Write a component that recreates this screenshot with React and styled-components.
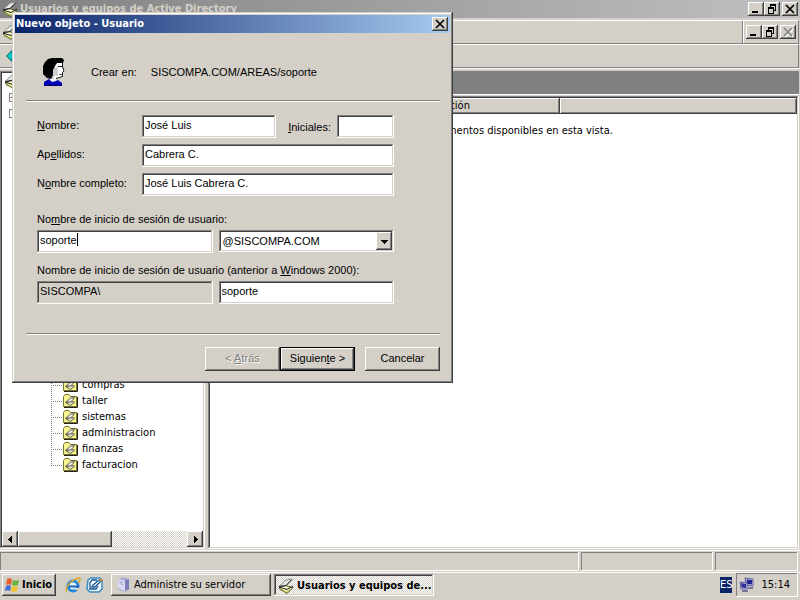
import React, { useState } from "react";
import styled, { createGlobalStyle, css } from "styled-components";

const tahoma = '"DejaVu Sans Condensed", "DejaVu Sans", sans-serif';
const msSans = '"Liberation Sans", Arial, sans-serif';
const face = "#d4d0c8";

const raised = css`
  box-shadow: inset -1px -1px #404040, inset 1px 1px #fff,
    inset -2px -2px #808080, inset 2px 2px ${face};
`;

const sunken = css`
  box-shadow: inset -1px -1px #fff, inset 1px 1px #808080,
    inset -2px -2px ${face}, inset 2px 2px #404040;
`;

const thinSunken = css`
  box-shadow: inset -1px -1px #fff, inset 1px 1px #808080;
`;

const dither = css`
  background: repeating-conic-gradient(#fff 0 25%, ${face} 0 50%) 0 0 / 2px 2px;
`;

const GlobalStyle = createGlobalStyle`
  * {
    box-sizing: border-box;
  }

  body {
    margin: 0;
    background: ${face};
    color: #000;
    font: 11px/14px ${tahoma};
  }

  button, input, select {
    margin: 0;
    padding: 0;
    border: none;
    border-radius: 0;
    outline: none;
    color: inherit;
    font: inherit;
  }

  svg {
    display: block;
    flex: none;
  }
`;

const units = [
  "compras",
  "taller",
  "sistemas",
  "administracion",
  "finanzas",
  "facturacion",
];

/* Icons */

const ConsoleIcon = () => (
  <svg width="16" height="16" viewBox="0 0 16 16">
    <path d="M1 10 7 7.500 15 9.500 9 15.500Z" fill="#eeeea0" stroke="#55552a" />
    <path d="M2 12 9 14.500 14 10.500" fill="none" stroke="#9a9a48" />
    <path d="M1 8.500 8 2 14 1 8 7.500Z" fill="#e4e6e6" stroke="#8a8d8e" />
    <path d="M1 8.500 8 7.500 14 1.500" fill="none" stroke="#222" />
    <path d="M1 9 9 11.500 15 8" fill="none" stroke="#222" />
    <path d="M5 9.500h5" stroke="#fff" />
  </svg>
);

const FolderIcon = () => (
  <svg width="16" height="16" viewBox="0 0 16 16">
    <path d="M1.500 3.500 3 1.500H7L8.500 3.500H14.500V13.500H1.500Z" fill="#f5f48c" stroke="#77772e" />
    <path d="M15.500 4V14.500H2" fill="none" stroke="#222" />
    <path d="M3.500 9.500 8 8.500 12.500 9 8.500 12.500Z" fill="#e8e6b8" stroke="#555" />
    <path d="M4 9 8.500 5 12.500 4.500 9 9Z" fill="#e6e6e6" stroke="#444" strokeWidth=".8" />
  </svg>
);

const UserIcon = () => (
  <svg width="24" height="30" viewBox="0 0 24 30">
    <path d="M11 5H20V10L22 14 20 15.500 19.500 20 14 21 13 25 8 24Z" fill="#fff" />
    <path d="M11 10H16V19H12V22H9V13Z" fill="#d0d0d0" />
    <path d="M3 5 6 2 10 1H20L22 3 21 6H15L13 9 11 13V18L9 22 5 21 1 17V9Z" fill="#000" />
    <path d="M16 9.500h4M20.500 6v4l1.500 4-1.500 1.500V19.500L14 21.500" fill="none" stroke="#000" strokeWidth=".9" />
    <path d="M17 17.500h3" stroke="#555" />
    <path d="M2 25 7 22 10 25 14 24 16 23 20 26V29H2Z" fill="#0000b8" />
    <path d="M2 28.500H20" stroke="#000060" />
  </svg>
);

const BackIcon = () => (
  <svg width="14" height="12" viewBox="0 0 14 12">
    <path d="M.5 6 6 .5V3.500H13V8.500H6V11.500Z" fill="#00c8c8" stroke="#006060" />
  </svg>
);

const WindowGlyph = ({ type }) => (
  <svg width="10" height="10" viewBox="0 0 10 10" fill="none" stroke="currentColor" shapeRendering="crispEdges">
    {type === "min" && <path d="M1 8h6" strokeWidth="2" />}
    {type === "max" && (
      <>
        <path d="M3 1h6M1 4h6" strokeWidth="2" />
        <path d="M3.500 2v2M8.500 2v4.500H7M1.500 5v4.500H6.500V5" />
      </>
    )}
    {type === "close" && (
      <path d="M1 1 9 9M9 1 1 9" strokeWidth="1.700" shapeRendering="auto" />
    )}
  </svg>
);

const Arrow = ({ to }) => (
  <svg width="7" height="7" viewBox="0 0 7 7" shapeRendering="crispEdges">
    {to === "left" && <path d="M5 0V7L1 3.500Z" />}
    {to === "right" && <path d="M2 0V7L6 3.500Z" />}
    {to === "down" && <path d="M0 2H7L3.500 6Z" />}
  </svg>
);

const StartFlag = () => (
  <svg width="16" height="16" viewBox="0 0 16 16">
    <path d="M3 2C5 1 6 1 8 2L7 8C5 7 4 7 2 8Z" fill="#e8602c" />
    <path d="M9 3C11 4 13 4 15 3L14 8C12 9 10 9 8 8Z" fill="#6cb33e" />
    <path d="M2 9C4 8 5 8 7 9L6 14C4 13 3 13 1 14Z" fill="#3d6fd0" />
    <path d="M8 9C10 10 12 10 14 9L13 14C11 15 9 15 7 14Z" fill="#f4c22c" />
  </svg>
);

const ExplorerIcon = () => (
  <svg width="16" height="16" viewBox="0 0 16 16">
    <circle cx="8" cy="9" r="5" fill="#e6f5ff" stroke="#2787d8" strokeWidth="3" />
    <path d="M4 9.500H14" stroke="#1667b8" strokeWidth="2" />
    <path d="M10 12H15" stroke="#d4d0c8" strokeWidth="2" />
    <path d="M2 15C-1 12 5 3 14 1 16 1 15 4 13 6" fill="none" stroke="#d9a92e" strokeWidth="1.500" />
  </svg>
);

const DesktopIcon = () => (
  <svg width="17" height="16" viewBox="0 0 17 16">
    <path d="M2 3 5 1H14L16 3V12L13 15H4L1 12Z" fill="#e9f7fd" stroke="#3b8cc0" strokeWidth="1.500" />
    <path d="M11 3H6L4 6V12H10L12 9M7 8 13 3 15 4 9 10 6 10Z" fill="#fff" stroke="#14558f" strokeWidth="1.300" />
    <path d="M14 2 16 4" stroke="#e28a2c" strokeWidth="2" />
  </svg>
);

const ServerIcon = () => (
  <svg width="16" height="16" viewBox="0 0 16 16">
    <path d="M1 12 5 10 15 12 10 15.500Z" fill="#b9b9c8" />
    <path d="M3 2 8 .5 14 2V12L10 14 3 11Z" fill="#a8a7d8" />
    <path d="M3 2 10 3.500V14L3 11Z" fill="#d9d9f2" />
    <path d="M10 3.500 14 2V12L10 14Z" fill="#7d7bb8" />
    <path d="M4.500 4.500 8.500 5.500M4.500 6.500 8.500 7.500" stroke="#a4a4cc" />
  </svg>
);

const NetworkIcon = () => (
  <svg width="16" height="16" viewBox="0 0 16 16">
    <path d="M6 1 14 2V9L7 8Z" fill="#c7c7e8" stroke="#5c5c9a" />
    <path d="M7.500 2.500 13 3V7.500L8 7Z" fill="#23238c" />
    <path d="M1 5 8 6V12L2 12Z" fill="#d2d2ee" stroke="#5c5c9a" />
    <path d="M2 6 7 7V11L2.500 10.500Z" fill="#2d2d9c" />
    <path d="M3 14h6M9 11h5" stroke="#77779c" strokeWidth="2" />
  </svg>
);

/* Main window */

const Screen = styled.div`
  display: flex;
  flex-direction: column;
  height: 100vh;
  overflow: hidden;
`;

const MainWindow = styled.main`
  flex: 1;
  min-height: 0;
  display: flex;
  flex-direction: column;
`;

const TitleBar = styled.header`
  display: flex;
  align-items: center;
  gap: 2px;
  height: 18px;
  margin-bottom: 2px;
  padding: 0 2px;
  background: linear-gradient(90deg, #808080, #c0c0c0);
  color: ${face};
  font-weight: bold;
`;

const Caption = styled.h1`
  flex: 1;
  margin: 0;
  font-size: 11px;
  line-height: 14px;
  white-space: nowrap;
`;

const WindowButtons = styled.div`
  display: flex;

  > :last-child {
    margin-left: 2px;
  }
`;

const WindowButton = styled.button`
  display: grid;
  place-items: center;
  width: 16px;
  height: 14px;
  background: ${face};
  color: #000;
  ${raised}

  &:disabled {
    color: #808080;
  }

  &:disabled svg {
    filter: drop-shadow(1px 1px #fff);
  }
`;

const Bar = styled.div`
  display: flex;
  align-items: center;
  height: 24px;
  margin-right: 1px;
  border-top: 1px solid #fff;
  border-right: 1px solid #808080;
  border-bottom: 1px solid #808080;
`;

const MenuArea = styled.div`
  flex: 1;
  align-self: stretch;
  display: flex;
  align-items: center;
  padding-left: 2px;
  border-right: 1px solid #808080;
`;

const ChildButtons = styled.div`
  align-self: stretch;
  display: flex;
  align-items: center;
  padding: 0 2px;
  border-left: 1px solid #fff;
`;

const ToolArea = styled.div`
  padding-left: 6px;
`;

const Panes = styled.div`
  flex: 1;
  min-height: 0;
  display: grid;
  grid-template-columns: 205px minmax(0, 1fr);
  gap: 3px;
  padding: 2px 1px 1px 0;
  border-top: 1px solid #fff;
`;

const TreePane = styled.nav`
  display: flex;
  flex-direction: column;
  min-height: 0;
  padding: 2px;
  background: #fff;
  ${sunken}
`;

const Tree = styled.ul`
  flex: 1;
  min-height: 0;
  margin: 0;
  padding: 0;
  overflow: hidden;
  list-style: none;
`;

const TreeNode = styled.li`
  display: flex;
  align-items: center;
  height: 16px;
  padding-left: ${(p) => (p.$level ? "7px" : "2px")};
`;

const Expander = styled.span`
  width: 9px;
  height: 9px;
  border: 1px solid #808080;
  font-size: 9px;
  line-height: 7px;
  text-align: center;
`;

const Units = styled.ul`
  margin: 256px 0 0;
  padding: 0 0 0 49px;
  list-style: none;
`;

const Unit = styled.li`
  display: flex;
  align-items: center;
  height: 16px;

  &::before {
    content: "";
    width: 11px;
    height: 16px;
    background:
      repeating-linear-gradient(#808080 0 1px, transparent 1px 2px) 0 0 / 1px 100% no-repeat,
      repeating-linear-gradient(90deg, #808080 0 1px, transparent 1px 2px) 0 8px / 100% 1px no-repeat;
  }

  &:last-child::before {
    background-size: 1px 9px, 100% 1px;
  }
`;

const UnitName = styled.span`
  padding-left: 4px;
`;

const ScrollBar = styled.div`
  display: flex;
  height: 16px;
  ${dither}
`;

const ScrollButton = styled.button`
  display: grid;
  place-items: center;
  width: 16px;
  background: ${face};
  ${raised}
`;

const ScrollThumb = styled.div`
  width: 94px;
  margin-right: auto;
  background: ${face};
  ${raised}
`;

const ResultPane = styled.section`
  display: flex;
  flex-direction: column;
  min-width: 0;
`;

const ResultBanner = styled.div`
  height: 24px;
  margin-bottom: 1px;
  border-bottom: 1px solid #fff;
  background: #808080;
`;

const ListBox = styled.div`
  flex: 1;
  padding: 2px;
  background: #fff;
  ${sunken}
`;

const List = styled.table`
  width: 100%;
  border-collapse: collapse;
  table-layout: fixed;
`;

const ColumnHead = styled.th`
  width: ${(p) => p.$width};
  height: 16px;
  padding: 0 6px;
  background: ${face};
  font-weight: normal;
  text-align: left;
  ${raised}
`;

const EmptyMessage = styled.td`
  padding: 10px 0;
  text-align: center;
`;

const StatusBar = styled.footer`
  display: grid;
  grid-template-columns: minmax(0, 1fr) 132px 83px;
  gap: 2px;
  height: 22px;
  padding: 1px 2px 1px 0;
  border-top: 1px solid #fff;
`;

const StatusPanel = styled.div`
  ${thinSunken}
`;

/* Dialog */

const Dialog = styled.form`
  position: absolute;
  top: 12px;
  left: 12px;
  width: 441px;
  padding: 3px;
  background: ${face};
  box-shadow: inset -1px -1px #404040, inset 1px 1px ${face},
    inset -2px -2px #808080, inset 2px 2px #fff;
  font-family: ${msSans};
`;

const DialogTitle = styled.header`
  display: flex;
  align-items: center;
  height: 18px;
  padding: 0 2px 0 1px;
  background: linear-gradient(90deg, #0a246a, #a6caf0);
  color: #fff;
  font-family: ${tahoma};
  font-weight: bold;
`;

const DialogBody = styled.div`
  padding: 24px 10px 9px 11px;
`;

const Target = styled.div`
  display: flex;
  align-items: center;
  gap: 14px;
  padding: 0 16px 13px;
`;

const TargetLabel = styled.span`
  margin-left: 11px;
`;

const Rule = styled.hr`
  height: 2px;
  margin: 0;
  border: none;
  border-top: 1px solid #808080;
  border-bottom: 1px solid #fff;
`;

const Fields = styled.div`
  padding: 13px 46px 29px 11px;
`;

const PersonGrid = styled.div`
  display: grid;
  grid-template-columns: 105px minmax(0, 1fr);
  align-items: center;
  row-gap: 6px;

  > label {
    padding-bottom: 3px;
  }
`;

const NameRow = styled.div`
  display: grid;
  grid-template-columns: minmax(0, 1fr) auto 57px;
  align-items: center;
  column-gap: 6px;

  label {
    padding-left: 6px;
  }
`;

const TextBox = styled.input`
  width: 100%;
  height: 23px;
  padding: 0 3px 4px;
  background: #fff;
  ${sunken}

  &:read-only {
    background: ${face};
  }
`;

const LogonRow = styled.div`
  display: grid;
  grid-template-columns: 1fr 1fr;
  gap: 6px;
  margin-top: 4px;
`;

const LogonLabel = styled.label`
  display: block;
  margin-top: ${(p) => (p.$first ? "16px" : "10px")};
`;

const ActiveBox = styled.div`
  display: flex;
  align-items: center;
  height: 23px;
  padding: 0 3px 4px;
  background: #fff;
  ${sunken}
`;

const ActiveInput = styled.input`
  field-sizing: content;
  max-width: 100%;
  background: none;
  caret-color: transparent;
`;

const Caret = styled.span`
  width: 1px;
  height: 13px;
  background: #000;
`;

const Combo = styled.div`
  position: relative;
  height: 22px;
`;

const ComboSelect = styled.select`
  width: 100%;
  height: 100%;
  padding: 0 20px 0 4px;
  appearance: none;
  background: #fff;
  ${sunken}
`;

const ComboArrow = styled.span`
  position: absolute;
  top: 2px;
  right: 2px;
  bottom: 2px;
  width: 16px;
  display: grid;
  place-items: center;
  background: ${face};
  pointer-events: none;
  ${raised}
`;

const Actions = styled.div`
  display: flex;
  justify-content: flex-end;
  padding-top: 12px;
`;

const ActionButton = styled.button`
  width: 75px;
  height: 24px;
  padding-bottom: 2px;
  background: ${face};
  ${raised}

  &:disabled {
    color: #808080;
    text-shadow: 1px 1px #fff;
  }

  &[type="submit"] {
    border: 1px solid #000;
  }

  &:last-child {
    margin-left: 10px;
  }
`;

/* Taskbar */

const TaskBar = styled.footer`
  display: flex;
  align-items: center;
  height: 28px;
  padding: 0 2px 3px;
  border-top: 1px solid #fff;
`;

const StartButton = styled.button`
  display: flex;
  align-items: center;
  gap: 2px;
  width: 54px;
  height: 22px;
  padding: 0 2px;
  background: ${face};
  font-weight: bold;
  ${raised}
`;

const QuickLaunch = styled.div`
  display: flex;
  gap: 5px;
  padding: 0 8px 0 9px;
`;

const QuickButton = styled.button`
  background: none;
`;

const Tasks = styled.div`
  flex: 1;
  display: flex;
  gap: 3px;
`;

const TaskButton = styled.button`
  display: flex;
  align-items: center;
  gap: 3px;
  width: 160px;
  height: 22px;
  padding: 0 4px;
  white-space: nowrap;
  ${(p) =>
    p.$active
      ? css`
          ${dither}
          ${sunken}
          padding-top: 2px;
          font-weight: bold;
        `
      : css`
          background: ${face};
          ${raised}
        `}
`;

const Language = styled.span`
  height: 16px;
  margin-right: 4px;
  background: #0a246a;
  color: #fff;
  line-height: 16px;
`;

const Tray = styled.div`
  display: flex;
  align-items: center;
  gap: 6px;
  height: 24px;
  padding: 0 8px 0 3px;
  ${thinSunken}
`;

const TopButtons = ({ closeDisabled }) => (
  <WindowButtons>
    <WindowButton type="button" aria-label="Minimizar">
      <WindowGlyph type="min" />
    </WindowButton>
    <WindowButton type="button" aria-label="Restaurar">
      <WindowGlyph type="max" />
    </WindowButton>
    <WindowButton type="button" aria-label="Cerrar" disabled={closeDisabled}>
      <WindowGlyph type="close" />
    </WindowButton>
  </WindowButtons>
);

const NewUserDialog = () => {
  const [user, setUser] = useState({
    first: "José Luis",
    initials: "",
    last: "Cabrera C.",
    full: "José Luis Cabrera C.",
    logon: "soporte",
    oldLogon: "soporte",
  });

  const bind = (key) => ({
    id: key,
    value: user[key],
    onChange: (e) => setUser({ ...user, [key]: e.target.value }),
  });

  return (
    <Dialog role="dialog" aria-labelledby="dialog-title" autoComplete="off" onSubmit={(e) => e.preventDefault()}>
      <DialogTitle>
        <Caption as="h2" id="dialog-title">Nuevo objeto - Usuario</Caption>
        <WindowButton type="button" aria-label="Cerrar">
          <WindowGlyph type="close" />
        </WindowButton>
      </DialogTitle>
      <DialogBody>
        <Target>
          <UserIcon />
          <TargetLabel>Crear en:</TargetLabel>
          <span>SISCOMPA.COM/AREAS/soporte</span>
        </Target>
        <Rule />
        <Fields>
          <PersonGrid>
            <label htmlFor="first"><u>N</u>ombre:</label>
            <NameRow>
              <TextBox {...bind("first")} />
              <label htmlFor="initials"><u>I</u>niciales:</label>
              <TextBox {...bind("initials")} />
            </NameRow>
            <label htmlFor="last">Ap<u>e</u>llidos:</label>
            <TextBox {...bind("last")} />
            <label htmlFor="full">N<u>o</u>mbre completo:</label>
            <TextBox {...bind("full")} />
          </PersonGrid>
          <LogonLabel $first htmlFor="logon">
            No<u>m</u>bre de inicio de sesión de usuario:
          </LogonLabel>
          <LogonRow>
            <ActiveBox>
              <ActiveInput {...bind("logon")} spellCheck={false} />
              <Caret />
            </ActiveBox>
            <Combo>
              <ComboSelect aria-label="Dominio">
                <option>@SISCOMPA.COM</option>
              </ComboSelect>
              <ComboArrow>
                <Arrow to="down" />
              </ComboArrow>
            </Combo>
          </LogonRow>
          <LogonLabel htmlFor="oldLogon">
            Nombre de inicio de sesión de usuario (anterior a <u>W</u>indows 2000):
          </LogonLabel>
          <LogonRow>
            <TextBox readOnly aria-label="Dominio anterior" value={"SISCOMPA\\"} />
            <TextBox {...bind("oldLogon")} />
          </LogonRow>
        </Fields>
        <Rule />
        <Actions>
          <ActionButton type="button" disabled>&lt; <u>A</u>trás</ActionButton>
          <ActionButton type="submit">Siguien<u>t</u>e &gt;</ActionButton>
          <ActionButton type="button">Cancelar</ActionButton>
        </Actions>
      </DialogBody>
    </Dialog>
  );
};

const App = () => (
  <Screen>
    <GlobalStyle />
    <MainWindow>
      <TitleBar>
        <ConsoleIcon />
        <Caption>Usuarios y equipos de Active Directory</Caption>
        <TopButtons />
      </TitleBar>
      <Bar>
        <MenuArea>
          <ConsoleIcon />
        </MenuArea>
        <ChildButtons>
          <TopButtons closeDisabled />
        </ChildButtons>
      </Bar>
      <Bar>
        <ToolArea>
          <BackIcon />
        </ToolArea>
      </Bar>
      <Panes>
        <TreePane>
          <Tree>
            <TreeNode>
              <ConsoleIcon />
            </TreeNode>
            <TreeNode $level={1}>
              <Expander>+</Expander>
            </TreeNode>
            <TreeNode $level={1}>
              <Expander>-</Expander>
            </TreeNode>
            <li>
              <Units>
                {units.map((name) => (
                  <Unit key={name}>
                    <FolderIcon />
                    <UnitName>{name}</UnitName>
                  </Unit>
                ))}
              </Units>
            </li>
          </Tree>
          <ScrollBar>
            <ScrollButton type="button" aria-label="Izquierda">
              <Arrow to="left" />
            </ScrollButton>
            <ScrollThumb />
            <ScrollButton type="button" aria-label="Derecha">
              <Arrow to="right" />
            </ScrollButton>
          </ScrollBar>
        </TreePane>
        <ResultPane>
          <ResultBanner />
          <ListBox>
            <List>
              <thead>
                <tr>
                  <ColumnHead $width="196px" />
                  <ColumnHead $width="154px">Descripción</ColumnHead>
                  <ColumnHead />
                </tr>
              </thead>
              <tbody>
                <tr>
                  <EmptyMessage colSpan={3}>No hay elementos disponibles en esta vista.</EmptyMessage>
                </tr>
              </tbody>
            </List>
          </ListBox>
        </ResultPane>
      </Panes>
      <StatusBar>
        <StatusPanel />
        <StatusPanel />
        <StatusPanel />
      </StatusBar>
    </MainWindow>
    <TaskBar>
      <StartButton type="button">
        <StartFlag />
        Inicio
      </StartButton>
      <QuickLaunch>
        <QuickButton type="button" aria-label="Internet Explorer">
          <ExplorerIcon />
        </QuickButton>
        <QuickButton type="button" aria-label="Mostrar escritorio">
          <DesktopIcon />
        </QuickButton>
      </QuickLaunch>
      <Tasks>
        <TaskButton type="button">
          <ServerIcon />
          Administre su servidor
        </TaskButton>
        <TaskButton type="button" $active>
          <ConsoleIcon />
          Usuarios y equipos de...
        </TaskButton>
      </Tasks>
      <Language>ES</Language>
      <Tray>
        <NetworkIcon />
        <time>15:14</time>
      </Tray>
    </TaskBar>
    <NewUserDialog />
  </Screen>
);

export default App;
